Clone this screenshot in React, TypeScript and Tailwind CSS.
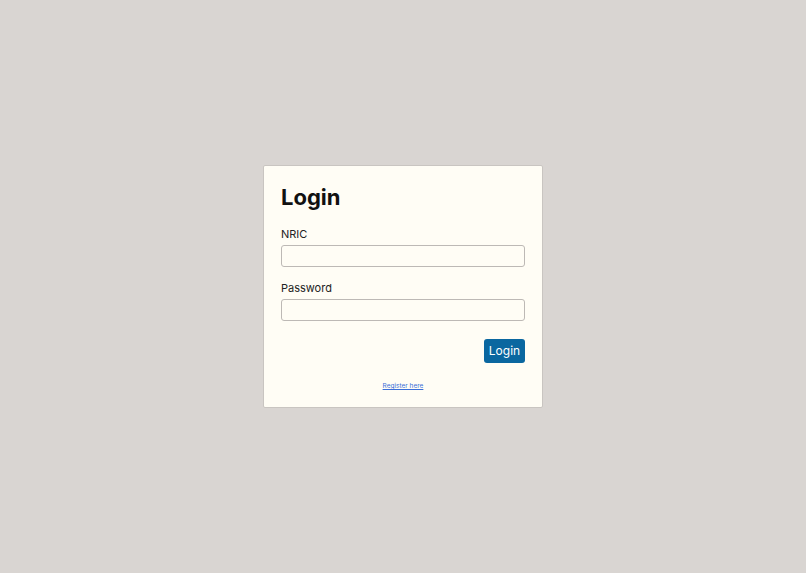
export default function App() {
  return (
    <div className="min-h-screen w-full flex items-center justify-center bg-[#d9d5d2] font-['Inter',sans-serif]">
      <div className="w-[280px] bg-[#fffdf5] border border-[#c9c5c1] rounded-[2px] px-[17px] pt-[17px] pb-[17px] flex flex-col">
        <h1 className="text-[22px] leading-[28px] font-bold text-[#111]">Login</h1>
        <label className="mt-[16px] text-[11px] leading-[14px] text-[#222]">NRIC</label>
        <input
          type="text"
          className="mt-[4px] h-[22px] w-full border border-[#bdb9b5] rounded-[3px] bg-[#fffdf5] outline-none"
        />
        <label className="mt-[14px] text-[11px] leading-[14px] text-[#222]">Password</label>
        <input
          type="password"
          className="mt-[4px] h-[22px] w-full border border-[#bdb9b5] rounded-[3px] bg-[#fffdf5] outline-none"
        />
        <div className="mt-[18px] flex justify-end">
          <button className="h-[24px] w-[41px] rounded-[3px] bg-[#0a67a0] text-white text-[12px]">
            Login
          </button>
        </div>
        <div className="mt-[19px] flex justify-center">
          <a href="#" className="text-[6.5px] leading-[8px] text-[#3b6fd8] underline">
            Register here
          </a>
        </div>
      </div>
    </div>
  );
}
